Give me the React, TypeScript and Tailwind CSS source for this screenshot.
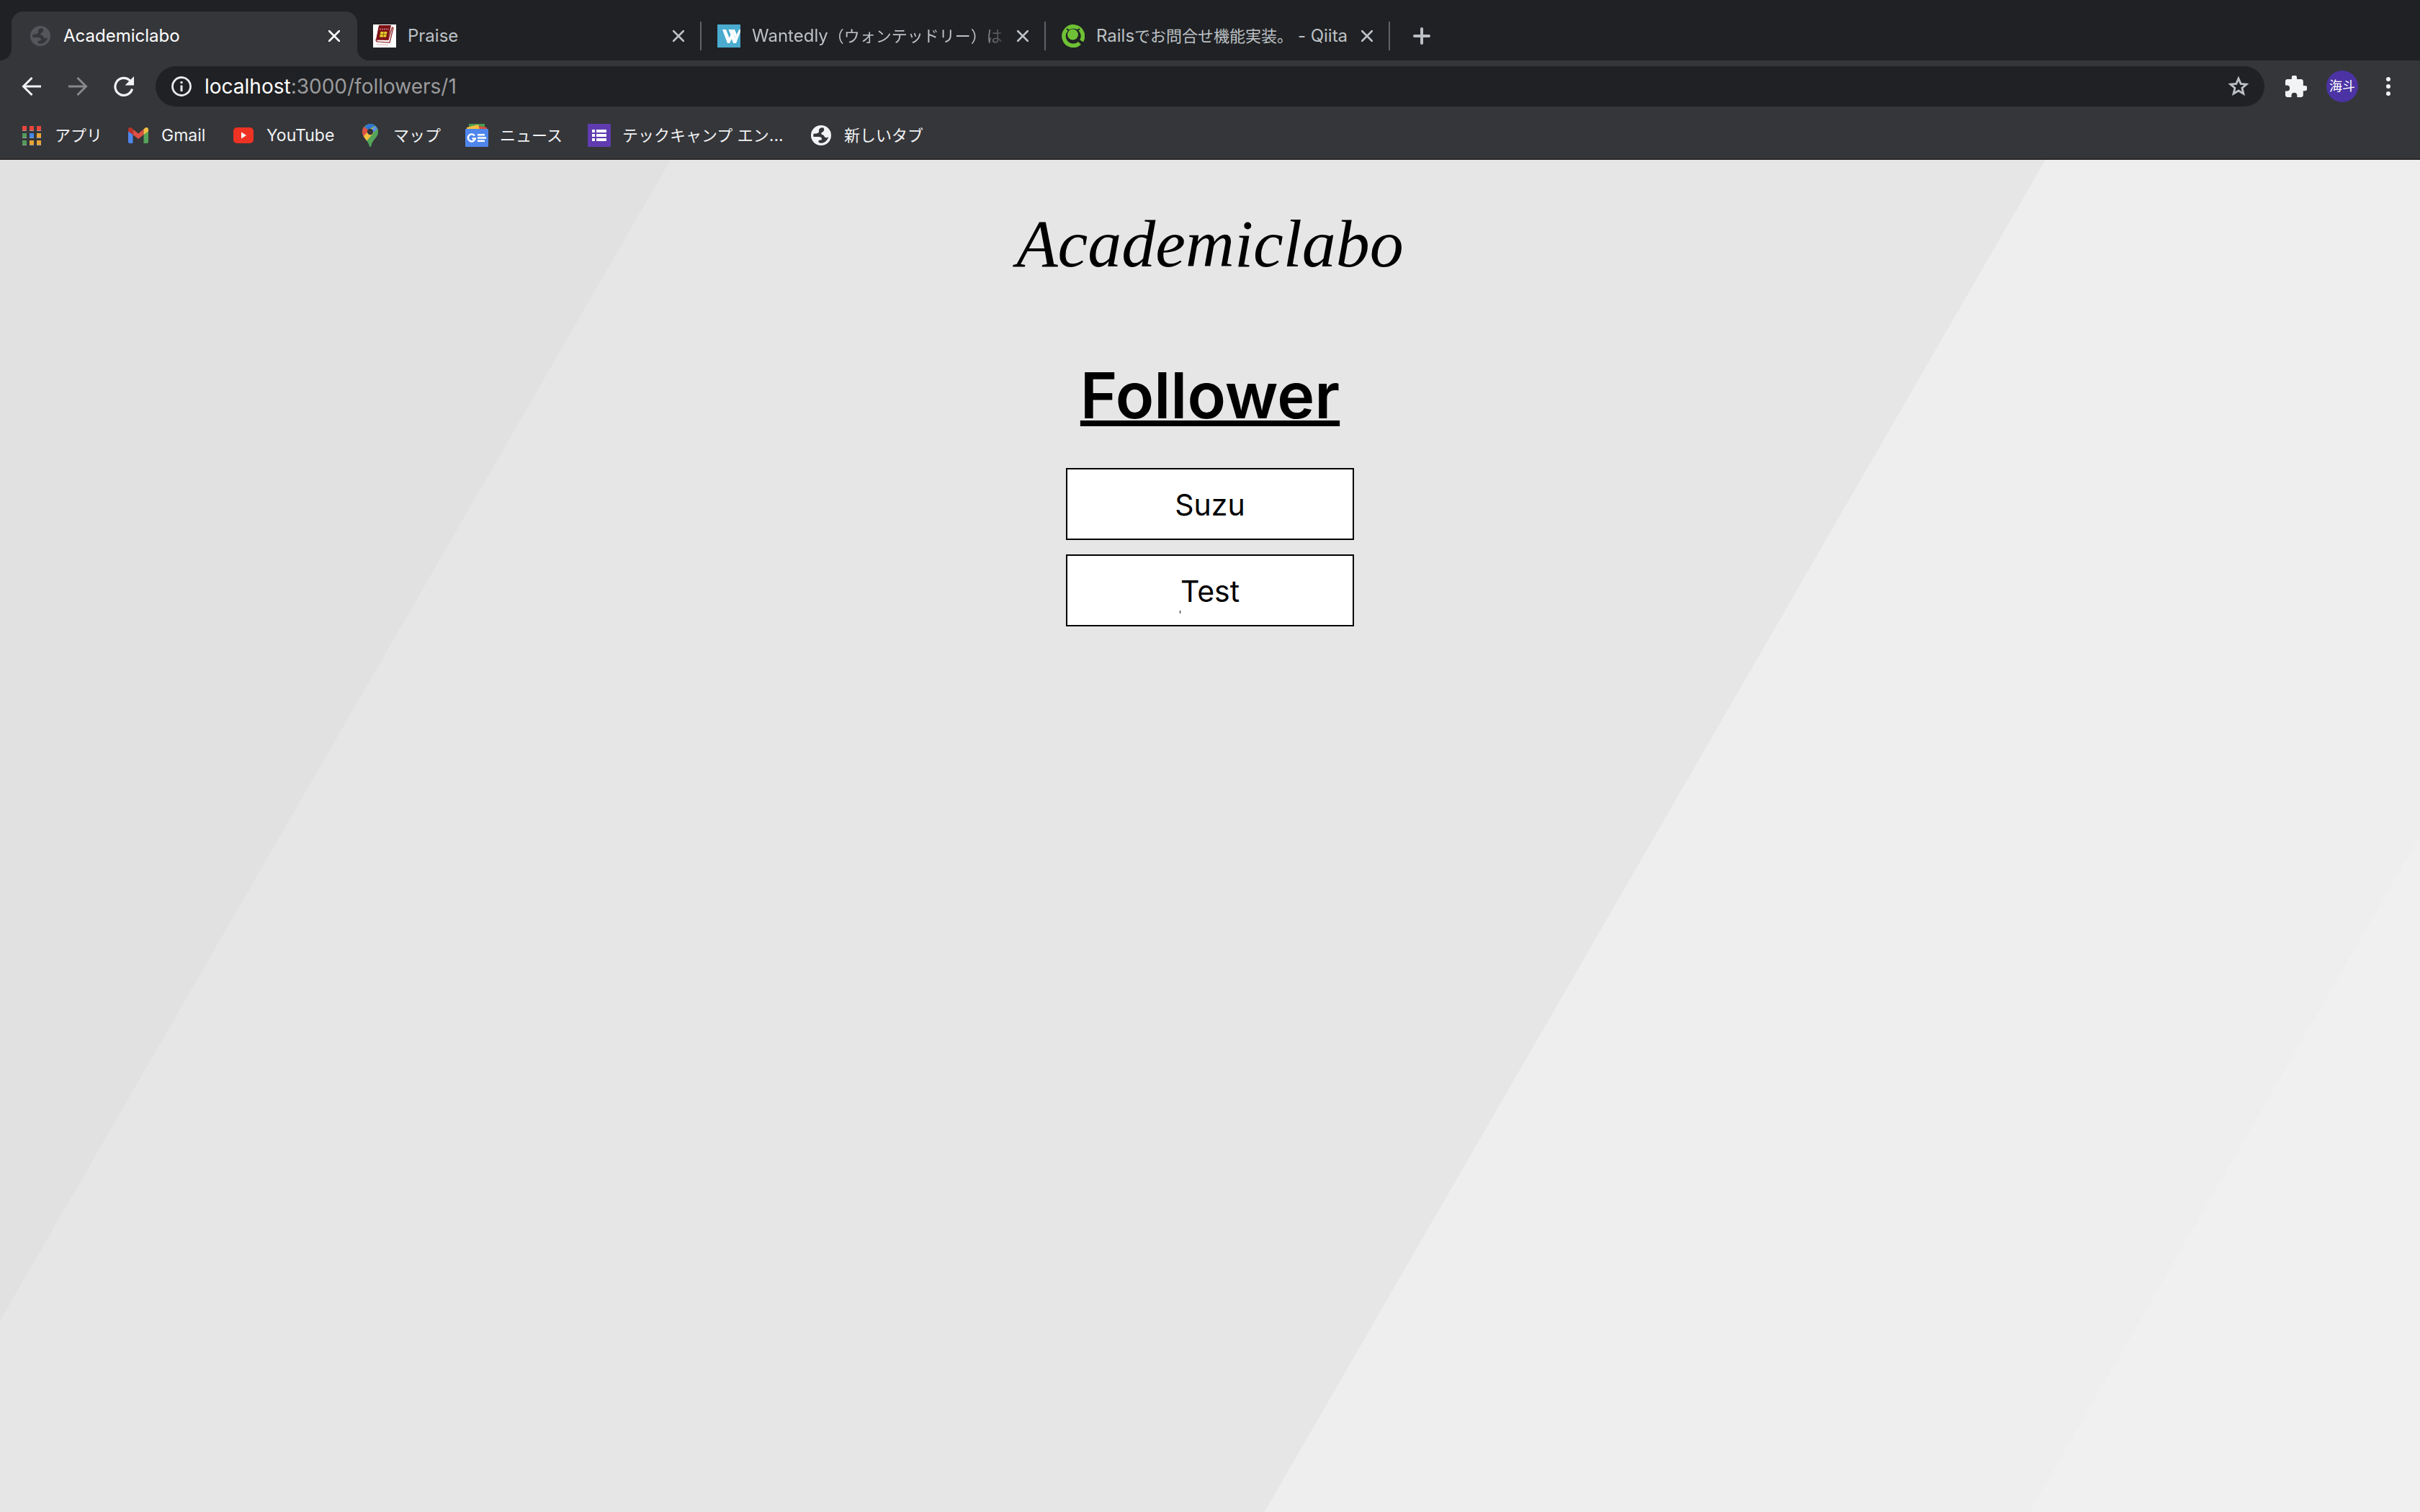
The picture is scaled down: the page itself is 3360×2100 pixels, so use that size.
import React from "react";

const ui = "font-['Inter','Noto_Sans_CJK_JP',sans-serif]";

function Close() {
  return (
    <button aria-label="Close tab" className="flex size-8 shrink-0 items-center justify-center">
      <svg viewBox="0 0 16 16" className="size-4" stroke="currentColor" strokeWidth="2.6" strokeLinecap="round">
        <path d="M1 1l14 14M15 1L1 15" />
      </svg>
    </button>
  );
}

/* Latin runs keep the parent's size; Japanese runs are set slightly smaller. */
function Mixed({ text }: { text: string }) {
  const runs = text.split(/([\u3000-\u9fff\uff00-\uffef]+)/).filter(Boolean);
  return (
    <>
      {runs.map((r, i) => (
        <span key={i} className={/[\u3000-\u9fff\uff00-\uffef]/.test(r) ? "text-[22px]" : ""}>
          {r}
        </span>
      ))}
    </>
  );
}

function Globe({ className }: { className: string }) {
  return (
    <svg viewBox="0 0 28 28" className={className}>
      <circle cx="14" cy="14" r="14" fill="currentColor" />
      <path
        d="M17 3.300c-2.600-.6-5.500.5-6 3.200-.2 1.500.5 2.500-.5 3.500-1.200 1.200-3.600 1.800-6.700 1.600-.6 1.200-.7 2.700-.3 4.400h7.200c2.600 0 4.300 1 4.300 3 0 1-.7 1.600-2 1.600-1.800 0-2.700.8-2.700 2 0 1.400 1.500 2.200 4 2.100 5-.3 9-3.700 9.900-8.700-1.700 1.300-3.300 1.500-4.500.8-1.500-.8-1.300-2.300-2.700-3.200-1-.7-2.500-.4-2.700-1.800-.2-1.600 1.500-2 2.700-3 1.500-1.300 1.800-4.400 0-5.500z"
        fill="#35363a"
      />
    </svg>
  );
}

function Book() {
  return (
    <svg viewBox="0 0 32 32" className="size-8 shrink-0">
      <path d="M0 0h32v32H0z" fill="#fff" />
      <path d="M8 1h17l-4 20H4z" fill="#7d1216" />
      <path d="M4 21l17 .5L26.500 4l1.500 1-5 20-16-1c-2 0-3-1-3-3z" fill="#fff" stroke="#8f1d20" strokeWidth="1.200" />
      <path d="M9 6.500h13" stroke="#c98a8a" strokeWidth="1.500" strokeDasharray="2 1" />
      <path d="M10.500 10h9l-1.500 7.500H9z" fill="#e4d02e" />
      <path d="M15 10l-1 7.500M9.500 13.700h9.500" stroke="#9b5a14" />
      <path d="M5 27.500l16 1" stroke="#ecd2d2" strokeWidth="2" />
    </svg>
  );
}

function Wantedly() {
  return (
    <svg viewBox="0 0 32 32" className="size-8 shrink-0">
      <path d="M0 0h32v32H0z" fill="#4aabcf" />
      <path d="M7 7h5l4.500 11.500L18.500 14 15.500 7H20l5 12L30 7h2v3l-6 16h-4l-2-6-3 6h-3z" fill="#fff" />
      <path d="M20 7h4l3 7-2 5z" fill="#fff" />
    </svg>
  );
}

function Qiita() {
  return (
    <svg viewBox="0 0 32 32" className="size-8 shrink-0">
      <path d="M27.500 23A13.200 13.200 0 1 0 25 26" fill="none" stroke="#6fc135" strokeWidth="5.600" />
      <path d="M7 6l5 4M25 6l-5 4" stroke="#202124" strokeWidth="2" />
      <circle cx="15.500" cy="14" r="7.500" fill="#6fc135" />
      <path d="M24 22l7 4" stroke="#202124" strokeWidth="2" />
    </svg>
  );
}

const tabs = [
  { title: "Praise", icon: <Book />, tab: "w-[462px] pl-[6px]", fade: "" },
  {
    title: "Wantedly（ウォンテッドリー）は",
    icon: <Wantedly />,
    tab: "w-[478px] pl-[22px]",
    fade: "[mask-image:linear-gradient(to_right,black_88%,transparent)]",
  },
  { title: "Railsでお問合せ機能実装。 - Qiita", icon: <Qiita />, tab: "w-[478px] pl-[22px]", fade: "" },
];

function Apps() {
  const colors = ["#e8453c", "#e8453c", "#e8453c", "#549b5b", "#4387ee", "#e9a534", "#549b5b", "#e9a534", "#e9a534"];
  return (
    <svg viewBox="0 0 26 27" className="h-[27px] w-[26px]">
      {colors.map((c, i) => (
        <g key={i}>
          <rect x={(i % 3) * 10} y={Math.floor(i / 3) * 10} width="6" height="7" fill="#9a9da0" />
          <rect x={(i % 3) * 10} y={Math.floor(i / 3) * 10} width="6" height="6" fill={c} />
        </g>
      ))}
    </svg>
  );
}

function Gmail() {
  return (
    <svg viewBox="0 0 28 22" className="h-[22px] w-7">
      <path d="M0 5l6.500 4.500V22H2a2 2 0 0 1-2-2z" fill="#4f86ec" />
      <path d="M28 5l-6.500 4.500V22H26a2 2 0 0 0 2-2z" fill="#55a45a" />
      <path d="M6.500 2.500L14 8.500l7.500-6v7.500L14 16 6.500 10z" fill="#dd5144" />
      <path d="M0 3c0-3 3-4 5.500-1.500l1 1V10L0 5.500z" fill="#b93329" />
      <path d="M28 3c0-3-3-4-5.500-1.500l-1 1V10L28 5.500z" fill="#f3bf42" />
    </svg>
  );
}

function YouTube() {
  return (
    <svg viewBox="0 0 28 22" className="h-[22px] w-7">
      <rect width="28" height="22" rx="5" fill="#ee3224" />
      <path d="M11 6.500v9l7-4.500z" fill="#fff" />
    </svg>
  );
}

function Maps() {
  return (
    <svg viewBox="0 0 22 32" className="h-8 w-[22px]">
      <defs>
        <clipPath id="pin">
          <path d="M11 0a11 11 0 0 1 11 11c0 8-8.500 11-9.800 19.500-.3 2-2.100 2-2.400 0C9 24 0 19 0 11A11 11 0 0 1 11 0z" />
        </clipPath>
      </defs>
      <g clipPath="url(#pin)">
        <path d="M0 0h22v32H0z" fill="#55a45a" />
        <path d="M2 3l9 8-9 9-4-10z" fill="#dd5144" />
        <path d="M1 18L11 7l7-3-2 10L6 25z" fill="#f3bf42" />
        <path d="M22 5L5 25l8 8 12-15z" fill="#55a45a" />
        <path d="M3 4l5 4 10-6L12-2z" fill="#2f73d9" />
        <path d="M18.500 2.500L12 9l4 3 6-7z" fill="#5b90ee" />
      </g>
      <circle cx="11" cy="11" r="4.200" fill="#35363a" />
    </svg>
  );
}

function News() {
  return (
    <svg viewBox="0 0 32 32" className="size-8">
      <path d="M5 0h22v9H5z" fill="#4c9a50" />
      <path d="M18 3l12 2v5H18z" fill="#dd4b3e" />
      <path d="M2 5l16-4 2 7H2z" fill="#f3bf42" />
      <rect y="7" width="32" height="25" rx="1" fill="#4f86ec" />
      <path d="M13 16.500a5 5 0 1 0 .8 4H9.500" fill="none" stroke="#fff" strokeWidth="2.400" />
      <path d="M17 15.300h10M17 19.500h12M17 23.700h10" stroke="#fff" strokeWidth="2.400" />
    </svg>
  );
}

function Forms() {
  return (
    <svg viewBox="0 0 32 32" className="size-8">
      <rect width="32" height="32" rx="1" fill="#603bb0" />
      <path d="M6 10h4M6 16h4M6 22h4M12 10h14M12 16h14M12 22h14" stroke="#fff" strokeWidth="4" />
    </svg>
  );
}

const bookmarks = [
  { label: "アプリ", icon: <Apps />, cls: "w-[148px]" },
  { label: "Gmail", icon: <Gmail />, cls: "w-[146px]" },
  { label: "YouTube", icon: <YouTube />, cls: "w-[176px]" },
  { label: "マップ", icon: <Maps />, cls: "w-[148px]" },
  { label: "ニュース", icon: <News />, cls: "w-[170px]" },
  { label: "テックキャンプ エン...", icon: <Forms />, cls: "w-[308px]" },
  { label: "新しいタブ", icon: <Globe className="size-7 text-[#f1f3f4]" />, cls: "" },
];

const followers = ["Suzu", "Test"];

export default function App() {
  return (
    <div className={`flex min-h-screen flex-col bg-[#e6e6e6] text-black ${ui}`}>
      <header className="bg-[#35363a] text-[#f1f3f4]">
        <nav aria-label="Tabs" className="flex h-21 items-end bg-[#202124] text-2xl text-[#bdc1c6]">
          <div className="size-4 bg-[#35363a]">
            <div className="size-4 rounded-br-2xl bg-[#202124]" />
          </div>
          <div className="flex h-[68px] w-120 items-center rounded-t-2xl bg-[#35363a] pl-[26px] pr-4 text-white">
            <Globe className="size-7 shrink-0 text-[#54565b]" />
            <span className="ml-[18px] flex-1 truncate">Academiclabo</span>
            <Close />
          </div>
          <div className="size-4 bg-[#35363a]">
            <div className="size-4 rounded-bl-2xl bg-[#202124]" />
          </div>
          {tabs.map((t) => (
            <div key={t.title} className={`flex h-[68px] items-center ${t.tab}`}>
              {t.icon}
              <span className={`mr-1 ml-4 flex-1 whitespace-nowrap ${t.fade}`}>
                <Mixed text={t.title} />
              </span>
              <Close />
              <span className="ml-[14px] h-10 w-[2px] bg-[#5f6368]" />
            </div>
          ))}
          <button aria-label="New tab" className="mb-[22px] ml-8">
            <svg viewBox="0 0 24 24" className="size-6" stroke="currentColor" strokeWidth="4" strokeLinecap="round">
              <path d="M12 2v20M2 12h20" />
            </svg>
          </button>
        </nav>

        <div className="flex h-[72px] items-center pr-[41px] pl-[30px]">
          <button aria-label="Back">
            <svg viewBox="0 0 28 28" className="size-7" fill="none" stroke="currentColor" strokeWidth="3">
              <path d="M27 14H3M14.500 2L2.500 14l12 12" />
            </svg>
          </button>
          <button aria-label="Forward" className="ml-9 text-[#87888b]">
            <svg viewBox="0 0 28 28" className="size-7" fill="none" stroke="currentColor" strokeWidth="3">
              <path d="M1 14h24M13.500 2l12 12-12 12" />
            </svg>
          </button>
          <button aria-label="Reload" className="ml-9">
            <svg viewBox="0 0 28 28" className="size-7" fill="none">
              <path d="M25.500 17.500A12 12 0 1 1 22.500 6" stroke="currentColor" strokeWidth="3.200" />
              <path d="M28 0v12.500H15.500z" fill="currentColor" />
            </svg>
          </button>
          <div className="ml-[30px] flex h-14 flex-1 items-center rounded-full bg-[#202124] pr-[21px] pl-[22px]">
            <svg viewBox="0 0 28 28" className="size-7 shrink-0" fill="none" stroke="#e8eaed">
              <circle cx="14" cy="14" r="12.500" strokeWidth="2.800" />
              <path d="M14 12.500V21M14 7v3" strokeWidth="3" />
            </svg>
            <div className="ml-[18px] flex-1 text-[28px] leading-9 text-[#9a9b9d]">
              <span className="text-white">localhost</span>:3000/followers/1
            </div>
            <button aria-label="Bookmark this page">
              <svg viewBox="0 0 30 30" className="size-[30px]" fill="none" stroke="#bdc1c6" strokeWidth="2.800">
                <path d="M15 4l3.100 7.400 8 .7-6.100 5.200 1.900 7.800L15 21l-6.900 4.100L10 17.300l-6.100-5.200 8-.7z" />
              </svg>
            </button>
          </div>
          <button aria-label="Extensions" className="ml-[29px]">
            <svg viewBox="2 1.500 20.500 20.500" className="size-[30px]" fill="currentColor">
              <path d="M20.500 11H19V7c0-1.100-.9-2-2-2h-4V3.500a2.500 2.500 0 0 0-5 0V5H4c-1.100 0-2 .9-2 2v3.800h1.500a2.700 2.700 0 0 1 0 5.400H2V20c0 1.100.9 2 2 2h3.800v-1.500a2.700 2.700 0 0 1 5.400 0V22H17c1.100 0 2-.9 2-2v-4h1.500a2.500 2.500 0 0 0 0-5z" />
            </svg>
          </button>
          <button
            aria-label="Profile"
            className="ml-[27px] flex size-11 items-center justify-center rounded-full bg-[#4b33a3] text-lg text-white"
          >
            海斗
          </button>
          <button aria-label="Menu" className="ml-[39px]">
            <svg viewBox="0 0 6 26" className="h-[26px] w-[6px]" fill="currentColor">
              <circle cx="3" cy="3" r="3" />
              <circle cx="3" cy="13" r="3" />
              <circle cx="3" cy="23" r="3" />
            </svg>
          </button>
        </div>

        <nav
          aria-label="Bookmarks"
          className="flex h-[66px] items-center border-b-2 border-[#2a2828] pl-7 text-[23px] leading-8"
        >
          {bookmarks.map((b) => (
            <a key={b.label} href="#" className={`flex shrink-0 items-center gap-4 whitespace-nowrap ${b.cls}`}>
              <span className="flex w-8 justify-center">{b.icon}</span>
              <span>
                <Mixed text={b.label} />
              </span>
            </a>
          ))}
        </nav>
      </header>

      <main className="flex flex-1 flex-col items-center bg-[linear-gradient(120deg,#e1e1e1_20.950%,#e6e6e6_20.950%,#e6e6e6_63.900%,#eeeeee_63.900%,#eeeeee_87.800%,#f0f0f0_87.800%)]">
        <a
          href="#"
          className="mt-14 font-['Apple_Chancery','Z003','URW_Chancery_L','Liberation_Serif',cursive] text-[94px] leading-[120px] italic"
        >
          Academiclabo
        </a>
        <h1 className="mt-[86px] text-[88px] leading-[130px] font-semibold underline decoration-8 underline-offset-[3px] [text-decoration-skip-ink:none]">
          Follower
        </h1>
        <ul className="mt-9 flex w-100 flex-col gap-5 text-center text-[41px]">
          {followers.map((n) => (
            <li key={n} className="relative">
              <a href="#" className="flex h-25 items-center justify-center border-2 border-black bg-white pt-1">
                {n}
              </a>
              {n === "Test" && <span className="absolute bottom-[18px] left-[158px] h-1 w-px bg-black" />}
            </li>
          ))}
        </ul>
      </main>
    </div>
  );
}
